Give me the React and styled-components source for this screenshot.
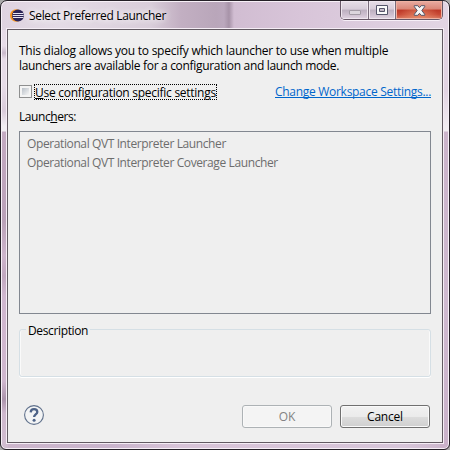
import React from "react";
import styled, { createGlobalStyle } from "styled-components";

const GlobalStyle = createGlobalStyle`
  *, *::before, *::after { box-sizing: border-box; }
  body { margin: 0; background: #a9a9a9; overflow: hidden; }
`;

const Window = styled.div`
  width: 450px;
  height: 450px;
  display: flex;
  flex-direction: column;
  padding: 0 6px 6px 5px;
  border: 1px solid #252027;
  border-radius: 7px 7px 6px 6px;
  font: 12px/15px "Open Sans", "Noto Sans", sans-serif;
  color: #000;
  box-shadow: inset 0 0 0 1px #f7f0f7;
  background:
    linear-gradient(90deg, #dfd3e0 0, #e4dbe5 60px, #d9cdda 150px, #c2afc2 180px, #b9a6ba 215px, #bba8bd 223px, #a793a8 228px, #d1bdd2 233px, #d8c5d9 300px, #e2d5e3 448px) 0 0 / 100% 29px no-repeat,
    linear-gradient(180deg, #e4d8e5 0, #e7dce8 45px, #c9b9cb 52px, #e7dce8 58px, #e7dce8 85px, #d9cbda 110px, #f1edf2 125px, #f1edf2 130px, #c4aac2 131px, #baa1b8 220px, #cdb5cc 255px, #c1a7bf 275px, #d0b7cf 295px, #cfb6ce 380px, #ac94ac 398px, #ceb7cd 412px, #d1bdd0 448px) 0 0 / 7px 100% no-repeat,
    linear-gradient(180deg, #e1d4e2 0, #e2d3e2 90px, #f2edf2 128px, #f2edf2 130px, #cbb3ca 131px, #cfb9cf 300px, #cab2ca 448px) 100% 0 / 9px 100% no-repeat,
    linear-gradient(90deg, #cdb6cc, #c9b4cc 25%, #d8c4d8 40%, #d7c5d9 90%, #cbb5cb);
`;

const TitleBar = styled.header`
  flex: 0 0 28px;
  display: flex;
  padding: 0 0 0 4px;
`;

const AppIcon = styled.svg`
  flex: none;
  width: 14px;
  height: 14px;
  margin-top: 7px;
`;

const Title = styled.h1`
  margin: 7px 0 0 5px;
  flex: 1;
  font: inherit;
  letter-spacing: -0.33px;
  text-shadow: 0 0 7px #fff, 0 0 9px #fff;
  white-space: nowrap;
`;

const WindowControls = styled.div`
  display: flex;
  height: 19px;
  border: 1px solid #665766;
  border-top: 0;
  border-radius: 0 0 5px 5px;
  overflow: hidden;
  box-shadow: 0 1px 0 #f7eff7;
`;

const ControlButton = styled.button`
  width: ${(p) => p.$width}px;
  height: 18px;
  padding: 0;
  border: 0;
  border-left: ${(p) => (p.$divider ? "1px solid #786b7a" : "0")};
  display: grid;
  place-items: center;
  background: ${(p) =>
    p.$close
      ? "radial-gradient(ellipse at 50% 110%, #e78a68 0, transparent 65%), linear-gradient(#e9aca2 0, #d98678 45%, #bd3827 50%, #c94a36 75%, #d97b65 100%)"
      : "linear-gradient(#e7dfe8 0, #d7ccd9 45%, #bdb0c0 50%, #cdbfcf 75%, #e1d4e2 100%)"};
  box-shadow: inset 0 0 0 1px ${(p) => (p.$close ? "#efb2a2" : "#efe7ef")};
`;

const Client = styled.main`
  flex: 1;
  display: flex;
  flex-direction: column;
  margin: 0 0 0 1px;
  padding: 13px 11px 14px 11px;
  border: 1px solid #625a62;
  outline: 1px solid #f5edf5;
  background: #efefef;
`;

const Message = styled.p`
  margin: 0;
  flex: 0 0 30px;
`;

const Line = styled.span`
  display: block;
  white-space: nowrap;
  letter-spacing: ${(p) => p.$tracking}px;
`;

const OptionRow = styled.div`
  flex: 0 0 16px;
  margin-top: 11px;
  display: flex;
  align-items: center;
`;

const CheckBox = styled.span`
  width: 13px;
  height: 13px;
  margin-bottom: 1px;
  border: 1px solid #8e8f8f;
  background: linear-gradient(135deg, #b9c0c8, #f6f6f6) 2px 2px / 7px 7px no-repeat, #f4f4f4;
`;

const FocusLabel = styled.label`
  width: 183px;
  height: 16px;
  margin-left: 2px;
  border: 1px dotted #000;
  line-height: 16px;
  letter-spacing: -0.27px;
  white-space: nowrap;
`;

const Mnemonic = styled.span`
  text-decoration: underline;
  text-decoration-thickness: 1px;
  text-underline-offset: 1px;
  text-decoration-skip-ink: none;
`;

const Link = styled.a`
  width: 156px;
  height: 14px;
  margin: 0 0 2px auto;
  color: #0066cc;
  border-bottom: 1px solid #0066cc;
  line-height: 16px;
  letter-spacing: -0.29px;
  white-space: nowrap;
`;

const FieldLabel = styled.div`
  margin-top: 8px;
  height: 15px;
  flex: none;
  line-height: 17px;
  letter-spacing: -0.42px;
`;

const LauncherList = styled.ul`
  flex: 0 0 183px;
  margin: 8px 0 0;
  padding: 2px 7px;
  border: 1px solid #828790;
  list-style: none;
  color: #6d6d6d;
`;

const LauncherItem = styled.li`
  height: 19px;
  line-height: 19px;
  letter-spacing: -0.39px;
  white-space: nowrap;
`;

const Group = styled.fieldset`
  flex: 0 0 55px;
  min-width: 0;
  margin: 8px 0 0;
  padding: 0 0 0 6px;
  border: 1px solid #d5dfe5;
  border-radius: 3px;
  box-shadow: 0 1px 0 #fff, inset 1px 0 0 #fafafa, inset -1px 0 0 #fafafa;
`;

const Legend = styled.legend`
  height: 15px;
  line-height: 17px;
  padding: 0 2px;
  letter-spacing: -0.36px;
`;

const Footer = styled.footer`
  margin-top: auto;
  display: flex;
  align-items: flex-end;
  padding: 0 1px 0 4px;
  gap: 8px;
`;

const HelpIcon = styled.svg`
  width: 22px;
  height: 22px;
  margin: 0 auto 2px 0;
`;

const PushButton = styled.button`
  width: 90px;
  height: 23px;
  padding: 1px 0 0;
  font: inherit;
  line-height: 20px;
  letter-spacing: -0.2px;
  border-radius: 3px;
  color: ${(p) => (p.disabled ? "#838383" : "#000")};
  border: 1px solid ${(p) => (p.disabled ? "#adb2b5" : "#707070")};
  background: ${(p) => (p.disabled ? "#f4f4f4" : "linear-gradient(#f2f2f2 0, #ebebeb 50%, #dddddd 51%, #cfcfcf 100%)")};
  box-shadow: inset 0 0 0 1px ${(p) => (p.disabled ? "#f9f9f9" : "#fafafa")};
`;

function EclipseLogo() {
  return (
    <AppIcon viewBox="0 0 14 14">
      <circle cx="6.2" cy="7.5" r="6.2" fill="#f7941e" />
      <circle cx="8" cy="7.5" r="6" fill="#2c2556" />
      <path d="M3 5.5h10.4M2.7 7.5h11M3 9.5h10.4" stroke="#e7e4f0" strokeWidth="1" />
    </AppIcon>
  );
}

const launchers = [
  "Operational QVT Interpreter Launcher",
  "Operational QVT Interpreter Coverage Launcher",
];

export default function App() {
  return (
    <>
      <GlobalStyle />
      <Window>
        <TitleBar>
          <EclipseLogo />
          <Title>Select Preferred Launcher</Title>
          <WindowControls>
            <ControlButton $width={27} aria-label="Minimize">
              <svg width="12" height="9" viewBox="0 0 12 9">
                <rect x=".5" y="4.5" width="11" height="4" rx=".5" fill="#dcd6dd" stroke="#a39ba5" />
              </svg>
            </ControlButton>
            <ControlButton $width={27} $divider aria-label="Maximize">
              <svg width="12" height="10" viewBox="0 0 12 10">
                <path fillRule="evenodd" d="M.5.5h11v9H.5zM3.5 3.5v3h5v-3z" fill="#fafafa" stroke="#55556a" />
              </svg>
            </ControlButton>
            <ControlButton $width={47} $divider $close aria-label="Close">
              <svg width="13" height="11" viewBox="0 0 13 11">
                <path d="M1.3.7h3.5l1.7 2L8.2.7h3.5v1L8.8 5.5l2.9 3.8v1H8.2l-1.7-2-1.7 2H1.3v-1l2.9-3.8L1.3 1.7z" fill="#f7f7f7" stroke="#535568" />
              </svg>
            </ControlButton>
          </WindowControls>
        </TitleBar>
        <Client>
          <Message>
            <Line $tracking={-0.25}>This dialog allows you to specify which launcher to use when multiple</Line>
            <Line $tracking={-0.32}>launchers are available for a configuration and launch mode.</Line>
          </Message>
          <OptionRow>
            <CheckBox role="checkbox" aria-checked="false" />
            <FocusLabel><Mnemonic>U</Mnemonic>se configuration specific settings</FocusLabel>
            <Link>Change Workspace Settings...</Link>
          </OptionRow>
          <FieldLabel>Launc<Mnemonic>h</Mnemonic>ers:</FieldLabel>
          <LauncherList>
            {launchers.map((name) => <LauncherItem key={name}>{name}</LauncherItem>)}
          </LauncherList>
          <Group><Legend>Description</Legend></Group>
          <Footer>
            <HelpIcon viewBox="0 0 22 22">
              <circle cx="11" cy="11" r="9.4" fill="#f3f4f5" stroke="#60718c" strokeWidth="1.1" />
              <path d="M7.7 8.4C7.8 6 9 5.1 11 5.1c2.2 0 3.3 1.1 3.3 2.8 0 2.4-3.2 2.6-3.2 5" fill="none" stroke="#4d6287" strokeWidth="2.3" />
              <circle cx="11.1" cy="16.3" r="1.5" fill="#4d6287" />
            </HelpIcon>
            <PushButton disabled>OK</PushButton>
            <PushButton>Cancel</PushButton>
          </Footer>
        </Client>
      </Window>
    </>
  );
}
